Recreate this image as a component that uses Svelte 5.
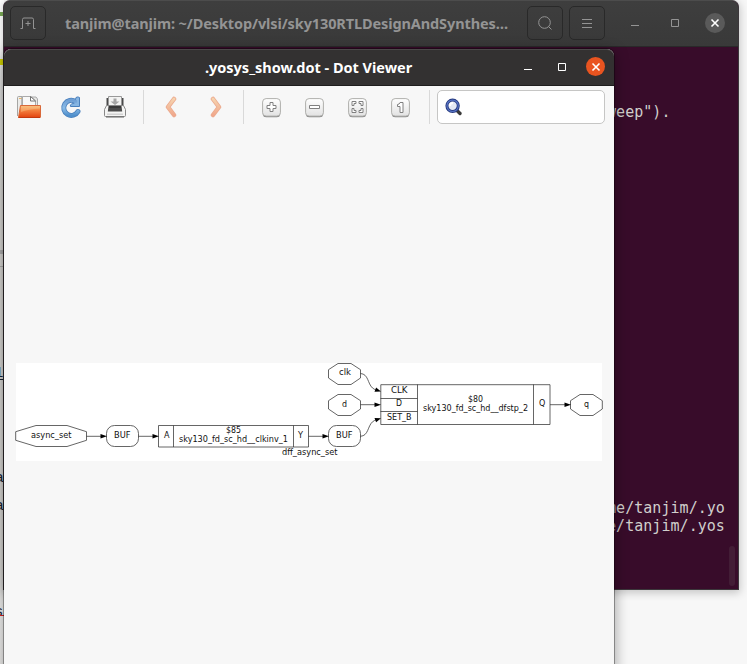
<script>
  const labels = [
    { t: 'async_set', x: 31, y: 438, w: 40.5 },
    { t: 'BUF', x: 114, y: 438, w: 16.5 },
    { t: 'A', x: 164, y: 438, w: 5.5 },
    { t: '$85', x: 226, y: 433, w: 15 },
    { t: 'sky130_fd_sc_hd__clkinv_1', x: 179, y: 442, w: 109 },
    { t: 'Y', x: 298, y: 438, w: 5 },
    { t: 'dff_async_set', x: 282, y: 455, w: 55.5 },
    { t: 'BUF', x: 336, y: 438, w: 16.5 },
    { t: 'clk', x: 339, y: 375, w: 12 },
    { t: 'd', x: 342, y: 406.5, w: 5 },
    { t: 'CLK', x: 391, y: 393, w: 16.5 },
    { t: 'D', x: 396, y: 406.3, w: 6 },
    { t: 'SET_B', x: 387, y: 420.3, w: 24.5 },
    { t: '$80', x: 468, y: 402, w: 15 },
    { t: 'sky130_fd_sc_hd__dfstp_2', x: 423, y: 411, w: 105 },
    { t: 'Q', x: 539, y: 406.3, w: 6.3 },
    { t: 'q', x: 584, y: 406.5, w: 5 }
  ];
  const octagons = [
    '36,425.5 67,425.5 86.5,431.7 86.5,440.3 67,446.5 36,446.5 15.7,440.3 15.7,431.7',
    '338,363.5 351,363.5 360.5,369.7 360.5,378 351,384.5 338,384.5 328.5,378 328.5,369.7',
    '338,394.5 351,394.5 360.5,400.7 360.5,409 351,415.5 338,415.5 328.5,409 328.5,400.7',
    '580,394.5 593,394.5 602.3,400.7 602.3,409 593,415.5 580,415.5 570.5,409 570.5,400.7'
  ];
  const arrows = [
    { x1: 86.5, x2: 107, y: 436.3 },
    { x1: 138.5, x2: 159, y: 436.3 },
    { x1: 308.5, x2: 329, y: 436.3 },
    { x1: 360.5, x2: 381, y: 404.7 },
    { x1: 550, x2: 571, y: 404.7 }
  ];
  const zooms = [
    'M8 4.500h3v3h3v3h-3v3h-3v-3h-3v-3h3z',
    'M4.500 7.500h10v3h-10z',
    'M4 3.500h4v2h-2v2h-2zM15 3.500h-4v2h2v2h2zM4 14.500h4v-2h-2v-2h-2zM15 14.500h-4v-2h2v-2h2z',
    'M9 4.500h3v10h-3v-6h-2.500v-2q2 0 2.500-2z'
  ];
</script>

<div class="desktop">
  <div class="backdrop">
    <i class="green"></i><i class="yellow"></i><i class="band"></i><i class="rule"></i>
    <b style="top:363px">1</b><i class="line"></i>
    <b style="top:468px">a</b><b style="top:496px">a</b><b style="top:602px">s</b><i class="red"></i>
  </div>

  <section class="terminal">
    <header>
      <button class="tool" aria-label="New tab">
        <svg width="18" height="16" viewBox="0 0 18 16"><path d="M1.500 13.500h2V4.500q0-1.500 1.500-1.500h8q1.500 0 1.500 1.500v9h2M9 6v5M6.500 8.500h5" /></svg>
      </button>
      <h1 class="path">tanjim@tanjim: ~/Desktop/vlsi/sky130RTLDesignAndSynthes…</h1>
      <button class="tool" aria-label="Search">
        <svg width="18" height="18" viewBox="0 0 18 18"><circle cx="8.500" cy="8.500" r="5.800" /><path d="M12.500 12.500l3 3" /></svg>
      </button>
      <button class="tool menu" aria-label="Menu">
        <svg width="12" height="12" viewBox="0 0 12 12"><path d="M1 2.500h10M1 6.500h10M1 10.500h10" /></svg>
      </button>
      <svg class="min" width="8" height="10" viewBox="0 0 8 10"><path d="M0 7.500h8" /></svg>
      <svg class="max" width="8" height="8" viewBox="0 0 8 8"><path d="M.5.5h7v7h-7z" /></svg>
      <div class="close"><svg width="10" height="10" viewBox="0 0 10 10"><path d="M1.500 1.500l7 7m0-7l-7 7" /></svg></div>
    </header>
    <div class="screen">
      <pre class="first">weep").</pre>
      <pre class="second">me/tanjim/.yo</pre>
      <pre>e/tanjim/.yos</pre>
      <div class="thumb"></div>
    </div>
  </section>

  <section class="viewer">
    <header>
      <h2><span class="name">.yosys_show.dot - Dot Viewer</span></h2>
      <svg class="min" width="8" height="10" viewBox="0 0 8 10"><path d="M0 7.500h8" /></svg>
      <svg class="max" width="8" height="8" viewBox="0 0 8 8"><path d="M.5.5h7v7h-7z" /></svg>
      <div class="close"><svg width="10" height="10" viewBox="0 0 10 10"><path d="M1.500 1.500l7 7m0-7l-7 7" /></svg></div>
    </header>
    <nav>
      <svg class="open" width="26" height="24" viewBox="0 0 26 24">
        <defs>
          <linearGradient id="orange" x2="0" y2="1"><stop stop-color="#f5b56d" /><stop offset=".45" stop-color="#f27c3c" /><stop offset="1" stop-color="#e34410" /></linearGradient>
          <linearGradient id="blue" x2="0" y2="1"><stop stop-color="#6f9fd4" /><stop offset=".5" stop-color="#8bbce8" /><stop offset="1" stop-color="#5090cc" /></linearGradient>
          <linearGradient id="peach" x2="0" y2="1"><stop stop-color="#f6d3ae" /><stop offset="1" stop-color="#f0a88c" /></linearGradient>
          <linearGradient id="key" x2="0" y2="1"><stop stop-color="#fff" /><stop offset="1" stop-color="#e2e2e2" /></linearGradient>
        </defs>
        <path d="M1.500 21V2.500q0-1 1-1h3.500V12" fill="#ececea" stroke="#a6a6a4" />
        <path d="M3 3.500h4" stroke="#e9b566" />
        <path d="M6 12V2h14l1.500 2v8z" fill="#e8e8e6" stroke="#aaa" />
        <path d="M6.500 12V1.500h8.500l4.500 4.500v6z" fill="#f8f8f7" stroke="#aaa" />
        <path d="M14.500 1.500v4.500h5z" fill="#fff" stroke="#777" />
        <path d="M2.500 22.500L4.500 10.500h20V22q0 .5-.5.500z" fill="url(#orange)" stroke="#d9693a" />
        <path d="M5 17q7-3 19-3.500v-2.500H5z" fill="#ffd7a0" opacity=".35" />
        <path d="M2.500 22.500H24" stroke="#c23a10" />
      </svg>
      <svg class="reload" width="22" height="24" viewBox="0 0 22 24">
        <path d="M18 16.500A7.600 7.600 0 1 1 15.500 6.500" fill="none" stroke="#4a80bd" stroke-width="5" stroke-linecap="round" />
        <path d="M19.500 2.500v9h-9q-.8-1.800 1-2.500l3-1 1.500-5.500q2-1.200 3.500 0z" fill="#86b5e2" stroke="#4a80bd" stroke-linejoin="round" />
        <path d="M18 16.500A7.600 7.600 0 1 1 15.500 6.500" fill="none" stroke="url(#blue)" stroke-width="3.400" stroke-linecap="round" />
      </svg>
      <svg class="print" width="24" height="24" viewBox="0 0 24 24">
        <path d="M3.500 3h17v9h-17z" fill="#4a4a4a" />
        <path d="M5.500 1.500h13v10h-13z" fill="#f3f3f2" stroke="#999" />
        <path d="M10.500 3.500h3v3h3L12 10 7.500 6.500h3z" fill="#a5a5a5" />
        <path d="M3.500 10.500h17l2 4v6q0 1-1 1h-19q-1 0-1-1v-6z" fill="#f4f4f3" stroke="#888" />
        <path d="M5.500 11h13l.7 5.500H4.800z" fill="#4c4c4c" />
        <path d="M6 12h12" stroke="#262626" />
        <path d="M4 18.500h16v1.500H4z" fill="#d2d2d2" />
        <path d="M3 22h18" stroke="#666" />
      </svg>
      <i class="sep one"></i>
      <svg class="back" width="14" height="22" viewBox="0 0 14 22"><path d="M10 3l-6 8 6 8" stroke="#ebaa8f" stroke-width="4.500" /><path d="M10 3l-6 8 6 8" stroke="url(#peach)" stroke-width="2.900" /></svg>
      <svg class="next" width="14" height="22" viewBox="0 0 14 22"><path d="M4 3l6 8-6 8" stroke="#ebaa8f" stroke-width="4.500" /><path d="M4 3l6 8-6 8" stroke="url(#peach)" stroke-width="2.900" /></svg>
      <i class="sep two"></i>
      <div class="zooms">
        {#each zooms as d}
          <svg width="19" height="20" viewBox="0 0 19 20">
            <rect x=".8" y="1.200" width="17.400" height="18" rx="3.500" fill="#888" />
            <rect x=".6" y=".6" width="17.800" height="17.500" rx="3.500" fill="url(#key)" stroke="#b0b0ad" />
            <path {d} fill="#fff" stroke="#808080" />
          </svg>
        {/each}
      </div>
      <i class="sep three"></i>
      <div class="entry">
        <svg width="18" height="19" viewBox="0 0 18 19">
          <path d="M12 12.500l3 3" stroke="#3a3a3a" stroke-width="3.400" stroke-linecap="round" />
          <circle cx="7.600" cy="7.800" r="5.700" fill="#e5eaf4" stroke="#26397f" stroke-width="3" />
          <circle cx="7.600" cy="7.800" r="5.700" fill="none" stroke="#5875c5" stroke-width="1.200" />
          <path d="M5 8q0-3 3-3" fill="none" stroke="#fff" stroke-width="2" />
        </svg>
      </div>
    </nav>

    <main>
      <svg class="graph" width="588" height="98" viewBox="15 363 588 98">
        <rect x="16" y="363" width="586" height="98" fill="#fff" />
        <g class="shape">
          {#each octagons as points}<polygon {points} />{/each}
          <rect x="106.500" y="425.500" width="32" height="21" rx="8" />
          <rect x="328.500" y="425.500" width="32" height="21" rx="8" />
          <path d="M158.500 425.500h150v21.500h-150zM173.500 425.500v21.500M293.500 425.500v21.500" />
          <path d="M380.800 384.700h169.200v39.800H380.800zM417.500 384.500v40M533.500 384.500v40M380.500 398.500h37M380.500 411.500h37" />
          <path d="M360.500 373.500c8 .5 7 10 12 14.500q2 1.500 4 2.300M360.500 436.300c8-.5 7-10 12-14.500q2-1.500 4-2.300" />
          {#each arrows as a}<path d="M{a.x1} {a.y}H{a.x2 - 4}" />{/each}
        </g>
        {#each arrows as a}<path d="M{a.x2} {a.y}l-6.500-2.300v4.600z" />{/each}
        <path d="M381 391.500l-6.500.2 1.600-4.200zM381 418.200l-6.500-.2 1.600 4.200z" />
        {#each labels as l}
          <text x={l.x} y={l.y} textLength={l.w} lengthAdjust="spacingAndGlyphs">{l.t}</text>
        {/each}
      </svg>
    </main>
  </section>
</div>

<style>
  .desktop { position: relative; width: 747px; height: 664px; overflow: hidden; background: #f7f7f7; }
  .backdrop { position: absolute; inset: 0 auto 0 0; width: 4px; overflow: hidden; background: linear-gradient(#fff 0, #fff 55px, #f0f0ef 90px, #e8e7e4 195px, #e8e7e4 570px, #f4f4f3 610px, #efeeed); font: 15px "Liberation Sans", sans-serif; }
  .backdrop i, .backdrop b { position: absolute; left: 0; width: 4px; }
  .backdrop b { left: -5px; width: 9px; color: #172638; font-weight: 400; line-height: 18px; }
  .green { top: 12px; height: 4px; background: #79a956; }
  .yellow { top: 59px; height: 6px; background: #e2e200; }
  .band { top: 250px; height: 4px; background: #bbb; }
  .rule { top: 266px; height: 1px; background: #bbb; }
  .line { top: 379px; height: 1px; background: #172638; }
  .red { top: 615px; height: 1px; background: #d22; }
  section { position: absolute; display: flex; flex-direction: column; box-sizing: border-box; }
  header { display: flex; align-items: center; box-sizing: border-box; flex: none; }
  h1, h2, pre { margin: 0; white-space: pre; }
  svg { display: block; flex: none; }
  header svg { fill: none; stroke: currentColor; }

  .terminal { left: 3px; top: 0; width: 736px; height: 590px; border: 1px solid #3c373b; border-top-color: #4c4c4c; border-radius: 7px 7px 0 0; background: #380c2a; box-shadow: 0 2px 8px 1px rgba(0,0,0,.2); }
  .terminal header { height: 46px; padding: 0 12px 2px 6px; border-bottom: 1px solid #292929; border-radius: 6px 6px 0 0; background: linear-gradient(#3e3e3e, #393939); color: #949494; }
  .tool { display: flex; align-items: center; justify-content: center; width: 36px; height: 34px; box-sizing: border-box; padding: 0; flex: none; border: 1px solid #292929; border-radius: 5px; background: transparent; color: inherit; }
  .path { width: 443px; margin: 0 19px; font: 700 14.500px/24px "Noto Sans", sans-serif; letter-spacing: -.11px; }
  .menu { margin-left: 6px; }
  .min { margin-left: 26px; }
  .max { margin-left: 32px; }
  .close { display: flex; align-items: center; justify-content: center; width: 20px; height: 20px; border-radius: 50%; flex: none; margin-left: 26px; background: #5a5a5a; color: #fff; }
  .close svg { stroke-width: 1.600; }
  .screen { position: relative; flex: 1; padding-left: 603px; color: #d0cfcc; font: 15px/18px "DejaVu Sans Mono", monospace; letter-spacing: .04px; }
  .first { padding-top: 56px; }
  .second { padding-top: 378px; }
  .thumb { position: absolute; right: 3px; bottom: 3px; width: 6px; height: 40px; border-radius: 3px; background: #431d36; }

  .viewer { left: 4px; top: 49px; width: 610px; height: 640px; border-radius: 7px 7px 0 0; background: #f7f7f7; box-shadow: 0 0 0 1px rgba(0,0,0,.32), 0 3px 14px 1px rgba(0,0,0,.36); }
  .viewer header { height: 37px; padding: 0 9px 2px 0; border-top: 1px solid #4a4848; border-bottom: 1px solid #1f1e1e; border-radius: 7px 7px 0 0; background: #333131; color: #fff; }
  h2 { flex: 1; padding-left: 201px; font: 700 14.500px/24px "Noto Sans", sans-serif; letter-spacing: -.02px; }
  .viewer .min { margin-left: 0; }
  .viewer .max { margin-left: 26px; }
  .viewer .close { width: 19px; height: 19px; margin-left: 20px; background: #e95420; }
  nav { display: flex; align-items: center; height: 42px; padding-left: 12px; flex: none; }
  nav svg { fill: none; }
  .reload { margin-left: 18px; }
  .print { margin-left: 21px; }
  .back, .next { stroke-linecap: round; stroke-linejoin: round; }
  .sep { width: 1px; height: 34px; background: #d9d9d9; flex: none; }
  .one { margin-left: 16px; }
  .back { margin-left: 20px; }
  .next { margin-left: 31px; }
  .two { margin-left: 20px; }
  .zooms { display: flex; gap: 24px; margin-left: 18px; padding-top: 1px; }
  .three { margin-left: 19px; }
  .entry { display: flex; align-items: center; box-sizing: border-box; width: 168px; height: 34px; margin-left: 7px; padding-left: 7px; border: 1px solid #c6c6c5; border-radius: 5px; background: #fff; }
  main { padding: 235px 0 0 11px; }
  .graph text { font: 8px "DejaVu Sans", sans-serif; fill: #111; }
  .shape { fill: none; stroke: #333; stroke-width: .75; }
</style>
